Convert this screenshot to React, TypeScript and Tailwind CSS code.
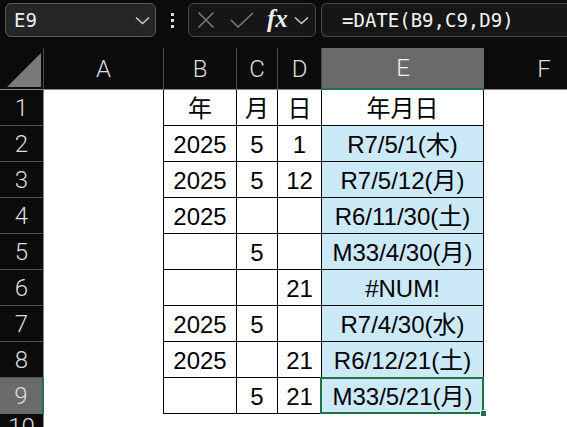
import React from "react";

type Row = { b: string; c: string; d: string; e: string };

const rows: Row[] = [
  { b: "年", c: "月", d: "日", e: "年月日" },
  { b: "2025", c: "5", d: "1", e: "R7/5/1(木)" },
  { b: "2025", c: "5", d: "12", e: "R7/5/12(月)" },
  { b: "2025", c: "", d: "", e: "R6/11/30(土)" },
  { b: "", c: "5", d: "", e: "M33/4/30(月)" },
  { b: "", c: "", d: "21", e: "#NUM!" },
  { b: "2025", c: "5", d: "", e: "R7/4/30(水)" },
  { b: "2025", c: "", d: "21", e: "R6/12/21(土)" },
  { b: "", c: "5", d: "21", e: "M33/5/21(月)" },
];

const letters = ["A", "B", "C", "D", "E", "F"];

function Chevron({ className }: { className?: string }) {
  return (
    <svg width="15" height="9" viewBox="0 0 15 9" className={className}>
      <path d="M1 1.5 L7.5 7.5 L14 1.5" fill="none" stroke="currentColor" strokeWidth="1.6" />
    </svg>
  );
}

function Toolbar() {
  return (
    <div className="h-[48px] flex items-start pt-[3px] pl-[5px] bg-[#0b0b0b]">
      {/* name box */}
      <div className="w-[151px] h-[34px] shrink-0 rounded-[6px] border border-[#5a5a5a] bg-[#262626] flex items-center justify-between pl-[8px] pr-[5px]">
        <span className="font-['DejaVu_Sans_Mono',monospace] text-[19px] text-[#ececec] leading-none">E9</span>
        <Chevron className="text-[#c8c8c8]" />
      </div>
      {/* splitter dots */}
      <div className="w-[32px] h-[34px] shrink-0 flex flex-col items-center justify-center gap-[3px]">
        <span className="w-[3px] h-[3px] bg-[#d8d8d8]" />
        <span className="w-[3px] h-[3px] bg-[#d8d8d8]" />
        <span className="w-[3px] h-[3px] bg-[#d8d8d8]" />
      </div>
      {/* cancel / enter / function */}
      <div className="w-[128px] h-[34px] shrink-0 rounded-[6px] border border-[#4a4a4a] bg-[#161616] flex items-center pl-[8px]">
        <svg width="18" height="18" viewBox="0 0 18 18" className="text-[#7c7c7c]">
          <path d="M1.5 1.5 L16.5 16.5 M16.5 1.5 L1.5 16.5" stroke="currentColor" strokeWidth="1.5" fill="none" />
        </svg>
        <svg width="24" height="16" viewBox="0 0 24 16" className="ml-[15px] text-[#7c7c7c]">
          <path d="M1 8 L8 15 L23 1" stroke="currentColor" strokeWidth="1.5" fill="none" />
        </svg>
        <span className="ml-[13px] font-['Liberation_Serif',serif] italic font-bold text-[25px] leading-none text-[#ececec] -mt-[3px]">fx</span>
        <Chevron className="ml-[6px] text-[#c8c8c8]" />
      </div>
      {/* formula */}
      <div className="ml-[5px] flex-1 h-[34px] rounded-l-[6px] border border-r-0 border-[#4a4a4a] bg-[#161616] flex items-center pl-[20px]">
        <span className="font-['DejaVu_Sans_Mono',monospace] text-[19px] leading-none text-[#f4f4f4]">=DATE(B9,C9,D9)</span>
      </div>
    </div>
  );
}

const headFont = "font-['Roboto',sans-serif] font-light text-[24px] leading-none text-[#dedede]";
const cellFont = "font-['Liberation_Sans','Noto_Sans_CJK_JP',sans-serif] text-[24px] leading-none text-black";

function Cell({ text, blue, last }: { text: string; blue?: boolean; last?: boolean }) {
  return (
    <div
      className={
        "relative flex items-center justify-center pt-[2px] border-r border-b border-black whitespace-nowrap " +
        cellFont +
        (blue ? " bg-[#cce9f7]" : " bg-white")
      }
    >
      {text}
      {last && (
        <>
          <div className="absolute -left-[2px] -top-[1px] -right-[1px] -bottom-[1px] border-2 border-[#217346]" />
          <div className="absolute -right-[4px] -bottom-[4px] w-[7px] h-[7px] bg-[#217346] border border-white" />
        </>
      )}
    </div>
  );
}

export default function App() {
  return (
    <div className="w-[567px] h-[427px] overflow-hidden bg-[#0b0b0b]">
      <Toolbar />
      <div className="h-[379px] overflow-hidden">
        <div className="grid w-[604px] grid-cols-[44px_120px_73px_41px_44px_162px_120px] grid-rows-[42px_repeat(10,36px)]">
          {/* corner */}
          <div className="flex items-end justify-end pr-[2px] pb-[2px] border-r border-b border-r-[#4a4a4a] border-b-[#8a8a8a] bg-[#0b0b0b]">
            <svg width="34" height="34" viewBox="0 0 34 34">
              <path d="M0 34 L34 34 L34 0 Z" fill="#7a7a7a" />
            </svg>
          </div>
          {letters.map((l) =>
            l === "E" ? (
              <div
                key={l}
                className={"flex items-center justify-center bg-[#6a6a6a] border-b-2 border-[#217346] text-[#f0f0f0] " + headFont}
              >
                {l}
              </div>
            ) : (
              <div
                key={l}
                className={
                  "flex items-center justify-center bg-[#0b0b0b] border-b border-b-[#8a8a8a] " +
                  (l === "F" ? "" : "border-r border-r-[#4a4a4a] ") +
                  headFont
                }
              >
                {l}
              </div>
            )
          )}

          {rows.map((r, i) => {
            const n = i + 1;
            const sel = n === 9;
            const isHead = n === 1;
            return (
              <React.Fragment key={n}>
                <div
                  className={
                    "flex items-center justify-center border-b " +
                    (sel
                      ? "bg-[#6a6a6a] border-b-[#6a6a6a] border-r-2 border-r-[#217346] "
                      : "bg-[#0b0b0b] border-b-[#555555] border-r border-r-[#8a8a8a] ") +
                    headFont
                  }
                >
                  {n}
                </div>
                <div className="bg-white border-r border-black" />
                <Cell text={r.b} />
                <Cell text={r.c} />
                <Cell text={r.d} />
                <Cell text={r.e} blue={!isHead} last={sel} />
                <div className="bg-white" />
              </React.Fragment>
            );
          })}

          {/* row 10 */}
          <div className={"flex items-start justify-center pt-[1px] bg-[#0b0b0b] border-r border-r-[#8a8a8a] " + headFont}>10</div>
          <div className="bg-white col-span-6" />
        </div>
      </div>
    </div>
  );
}
